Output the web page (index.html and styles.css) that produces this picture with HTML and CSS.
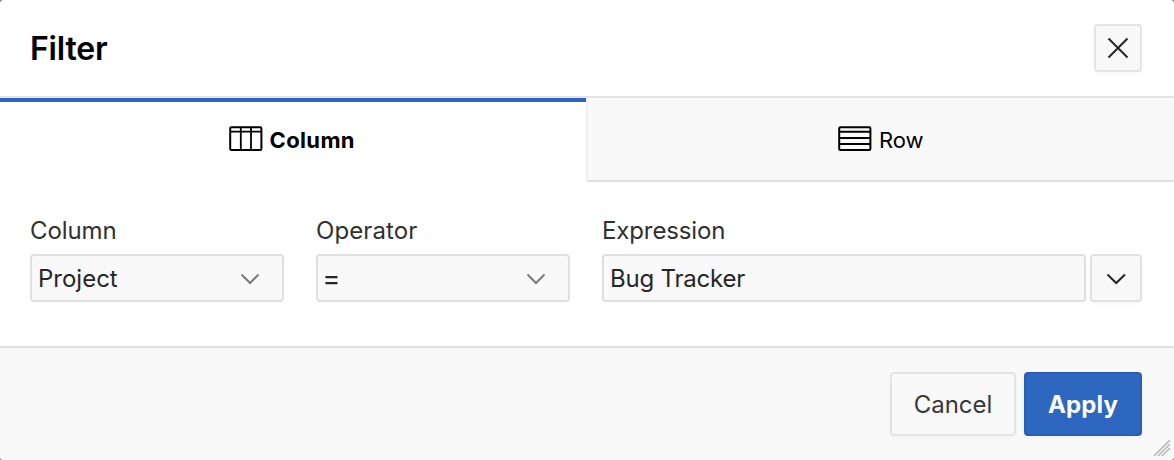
FILE: index.html
```html
<!DOCTYPE html>
<html lang="en">
<head>
<meta charset="utf-8">
<title>Filter</title>
<link rel="stylesheet" href="styles.css">
</head>
<body>
<section class="dialog">
  <header class="header">
    <h1>Filter</h1>
    <button class="close" aria-label="Close"><svg width="24" height="24" viewBox="0 0 24 24"><path d="M2.5 2.5 21.5 21.5M21.5 2.5 2.5 21.5"/></svg></button>
  </header>
  <nav class="tabs">
    <div class="tab active">
      <svg width="34" height="26" viewBox="0 0 34 26"><rect x="1.2" y="1.2" width="31.2" height="22.8" rx="1.2"/><path class="thin" d="M1 5.6H32M11.8 1V24M22 1V24"/></svg>
      <span class="label-column">Column</span>
    </div>
    <div class="tab">
      <svg width="34" height="26" viewBox="0 0 34 26"><rect x="1.2" y="1.2" width="31.2" height="22.8" rx="1.2"/><path d="M1 5.8H32M1 11.9H32M1 18H32"/></svg>
      <span class="label-row">Row</span>
    </div>
  </nav>
  <main class="fields">
    <label class="field"><span class="caption cap-column">Column</span>
      <span class="control"><span class="val-project">Project</span><svg class="chevron" width="20" height="12" viewBox="0 0 20 12"><path d="M1.5 1.5 10 10 18.5 1.5"/></svg></span>
    </label>
    <label class="field"><span class="caption cap-operator">Operator</span>
      <span class="control"><span class="val-equals">=</span><svg class="chevron" width="20" height="12" viewBox="0 0 20 12"><path d="M1.5 1.5 10 10 18.5 1.5"/></svg></span>
    </label>
    <label class="field wide"><span class="caption cap-expression">Expression</span>
      <span class="combo"><span class="control"><span class="val-bug">Bug Tracker</span></span><button class="drop" aria-label="Open list"><svg width="20" height="12" viewBox="0 0 20 12"><path d="M1.5 1.5 10.2 10 19 1.5"/></svg></button></span>
    </label>
  </main>
  <footer class="footer">
    <button class="btn">Cancel</button>
    <button class="btn primary">Apply</button>
    <svg class="grip" width="16" height="16" viewBox="0 0 16 16"><path d="M0 16 16 0M4 16 16 4M8 16 16 8"/></svg>
  </footer>
</section>
</body>
</html>
```
FILE: styles.css
```css
* { box-sizing: border-box; }
body { margin: 0; font-family: Inter, sans-serif; color: #262626; background: #8c8c8c; }
button { font: inherit; color: inherit; margin: 0; padding: 0; }
svg { fill: none; stroke: currentColor; stroke-width: 2; flex: none; display: block; }
.thin { stroke-width: 1.8; }
.dialog { width: 1174px; height: 460px; display: flex; flex-direction: column; overflow: hidden; background: #fff; border-radius: 4px; }
.header { height: 98px; flex: none; display: flex; align-items: center; justify-content: space-between; padding: 0 32px 0 30px; border-bottom: 2px solid #e4e4e4; }
h1 { margin: 0; padding-top: 2px; font-size: 32px; line-height: 40px; font-weight: 600; color: #000; letter-spacing: -0.2px; }
.close, .drop, .btn { box-shadow: 0 2px 4px rgba(0, 0, 0, .03); }
.close { width: 48px; height: 48px; display: grid; place-items: center; background: #f8f8f8; border: 2px solid #e4e4e4; border-radius: 4px; }
.tabs { height: 84px; flex: none; display: grid; grid-template-columns: 586px 588px; }
.tab { display: flex; align-items: center; justify-content: center; gap: 7px; font-size: 22px; line-height: 28px; color: #000; background: #f9f9f9; border-left: 2px solid #efefef; box-shadow: inset 0 -2px #dfdfdf; padding: 0 0 2px 0; }
.tab.active { background: #fff; border-left: 0; border-top: 4px solid #2d66c0; box-shadow: none; font-weight: 700; padding: 0 2px 6px 0; }
.label-column { padding-top: 1px; letter-spacing: .35px; margin-left: -.5px; }
.label-row { padding-top: 1px; margin-left: -.5px; }
.fields { height: 164px; flex: none; display: flex; gap: 32px; padding: 34px 32px 0 30px; }
.field { width: 254px; display: flex; flex-direction: column; gap: 8px; font-size: 24px; line-height: 30px; }
.field.wide { width: 540px; }
.caption { color: #303030; }
.cap-column { letter-spacing: -.1px; }
.cap-operator { letter-spacing: .1px; }
.cap-expression { letter-spacing: -.12px; }
.control { height: 48px; flex: 1; display: flex; align-items: center; justify-content: space-between; padding: 2px 22px 0 6px; border: 2px solid #dfdfdf; border-radius: 4px; background: #f9f9f9; }
.field > .control { flex: none; }
.val-bug { letter-spacing: -.2px; }
.val-equals { font-size: 27px; margin-left: -1.5px; }
.chevron { color: #7b7b7b; }
.combo { display: flex; gap: 4px; }
.drop { width: 52px; height: 48px; display: grid; place-items: center; background: #f8f8f8; border: 2px solid #e2e2e2; border-radius: 4px; padding-top: 2px; }
.footer { position: relative; flex: 1; display: flex; justify-content: flex-end; gap: 8px; padding: 24px 32px; background: #f9f9f9; border-top: 2px solid #dfdfdf; }
.btn { width: 126px; height: 64px; font-size: 24px; color: #383838; background: #f8f8f8; border: 2px solid #e4e4e4; border-radius: 4px; padding-top: 1px; }
.btn.primary { width: 118px; font-weight: 700; color: #fff; background: #2d67c0; border-color: #295fb2; letter-spacing: .1px; }
.grip { position: absolute; right: 4px; bottom: 4px; color: #b0b0b0; stroke-width: 1.4; }
```
